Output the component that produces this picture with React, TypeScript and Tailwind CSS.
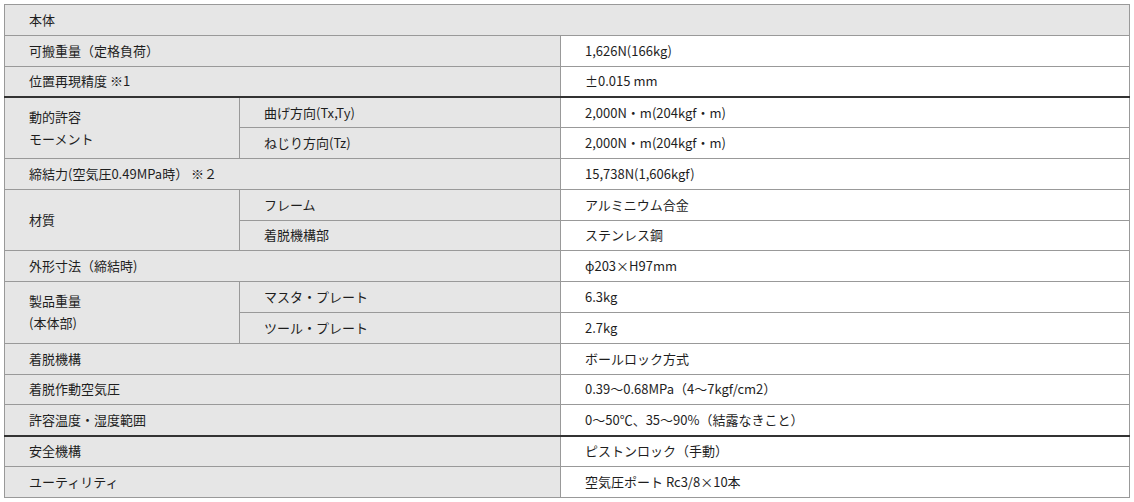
type Row = {
  label?: string
  labelLines?: string[]
  span?: number
  sub?: string
  value: string
  thick?: boolean
}

const rows: Row[] = [
  { label: '可搬重量（定格負荷）', value: '1,626N(166kg)' },
  { label: '位置再現精度 ※1', value: '±0.015 mm', thick: true },
  { labelLines: ['動的許容', 'モーメント'], span: 2, sub: '曲げ方向(Tx,Ty)', value: '2,000N・m(204kgf・m)' },
  { sub: 'ねじり方向(Tz)', value: '2,000N・m(204kgf・m)' },
  { label: '締結力(空気圧0.49MPa時） ※２', value: '15,738N(1,606kgf)' },
  { labelLines: ['材質'], span: 2, sub: 'フレーム', value: 'アルミニウム合金' },
  { sub: '着脱機構部', value: 'ステンレス鋼' },
  { label: '外形寸法（締結時)', value: 'ϕ203×H97mm' },
  { labelLines: ['製品重量', '(本体部)'], span: 2, sub: 'マスタ・プレート', value: '6.3kg' },
  { sub: 'ツール・プレート', value: '2.7kg' },
  { label: '着脱機構', value: 'ボールロック方式' },
  { label: '着脱作動空気圧', value: '0.39～0.68MPa（4～7kgf/cm2）' },
  { label: '許容温度・湿度範囲', value: '0～50℃、35～90%（結露なきこと）', thick: true },
  { label: '安全機構', value: 'ピストンロック（手動）' },
  { label: 'ユーティリティ', value: '空気圧ポート Rc3/8×10本' },
]

const cell = 'border border-[#999] pl-6 pr-2 py-0 align-middle'
const gray = 'bg-[#e6e6e6]'

export default function App() {
  return (
    <div className="bg-white w-[1134px] h-[502px] pt-1 pl-1 text-[13px] text-[#1e1e1e] leading-[22px]" style={{ fontFamily: '"Noto Sans CJK JP", "Noto Sans", sans-serif' }}>
      <table className="table-fixed border-collapse w-[1125px]">
        <colgroup>
          <col className="w-[235px]" />
          <col className="w-[321px]" />
          <col className="w-[569px]" />
        </colgroup>
        <tbody>
          <tr className="h-[30.8px]">
            <td colSpan={3} className={`${cell} ${gray}`}>本体</td>
          </tr>
          {rows.map((r, i) => {
            const bottom = r.thick ? 'border-b-2 border-b-[#333]' : ''
            return (
              <tr key={i} className="h-[30.8px]">
                {r.labelLines ? (
                  <td rowSpan={r.span} className={`${cell} ${gray}`}>
                    {r.labelLines.map((l) => <div key={l}>{l}</div>)}
                  </td>
                ) : r.label ? (
                  <td colSpan={2} className={`${cell} ${gray} ${bottom}`}>{r.label}</td>
                ) : null}
                {r.sub ? <td className={`${cell} ${gray}`}>{r.sub}</td> : null}
                <td className={`${cell} ${bottom}`}>{r.value}</td>
              </tr>
            )
          })}
        </tbody>
      </table>
    </div>
  )
}
